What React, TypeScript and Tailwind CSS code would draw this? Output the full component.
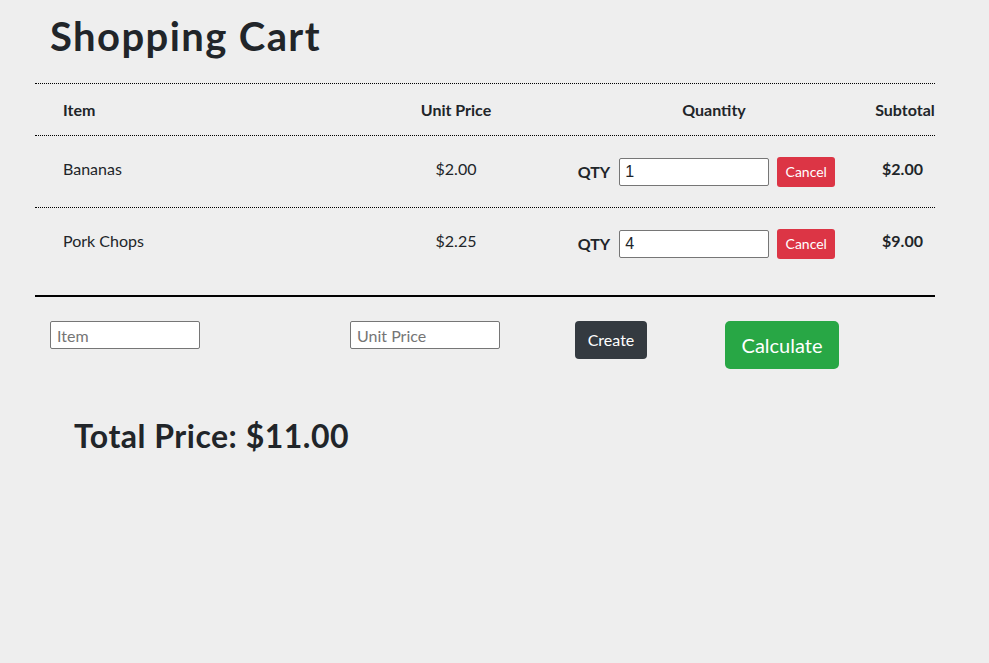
const items = [
  { name: "Bananas", price: "$2.00", qty: "1", subtotal: "$2.00" },
  { name: "Pork Chops", price: "$2.25", qty: "4", subtotal: "$9.00" },
];

const App = () => {
  return (
    <div className="min-h-[663px] bg-[#eeeeee] text-[#212529] font-['Lato','Noto_Sans',sans-serif]">
      <div className="ml-[35px] w-[900px]">
        <h1 className="h-[83px] pl-[15px] pt-[12px] text-[40px] font-bold leading-[1.2] tracking-[1.4px]">
          Shopping Cart
        </h1>

        <div className="grid grid-cols-[324px_194px_322px_60px] border-t border-dotted border-black">
          <div className="flex h-[51px] items-center pl-[28px] font-bold">Item</div>
          <div className="flex items-center justify-center font-bold">Unit Price</div>
          <div className="flex items-center justify-center font-bold">Quantity</div>
          <div className="flex items-center justify-center whitespace-nowrap font-bold">Subtotal</div>
        </div>

        {items.map(item => (
          <div
            key={item.name}
            className="grid h-[72px] grid-cols-[324px_194px_322px_60px] border-t border-dotted border-black"
          >
            <div className="flex items-center pb-[6px] pl-[28px]">{item.name}</div>
            <div className="flex items-center justify-center pb-[6px]">{item.price}</div>
            <div className="flex items-center justify-center pr-[15px]">
              <span className="mr-[9px] font-bold">QTY</span>
              <input
                defaultValue={item.qty}
                className="h-[28px] w-[150px] rounded-[2px] border border-[#767676] bg-white px-[5px] font-['Liberation_Sans',sans-serif] text-[16px] outline-none"
              />
              <button className="ml-[8px] h-[30px] w-[58px] rounded-[3px] bg-[#dc3545] text-[14px] text-white">
                Cancel
              </button>
            </div>
            <div className="flex items-center justify-center pb-[6px] pr-[5px] font-bold">
              {item.subtotal}
            </div>
          </div>
        ))}

        <div className="mt-[16px] border-t-2 border-black" />

        <div className="flex items-start pt-[24px]">
          <input
            placeholder="Item"
            className="ml-[15px] h-[28px] w-[150px] rounded-[2px] border border-[#767676] bg-white px-[6px] text-[16px] outline-none placeholder:text-[#757575]"
          />
          <input
            placeholder="Unit Price"
            className="ml-[150px] h-[28px] w-[150px] rounded-[2px] border border-[#767676] bg-white px-[6px] text-[16px] outline-none placeholder:text-[#757575]"
          />
          <button className="ml-[75px] h-[38px] w-[72px] rounded-[4px] bg-[#343a40] text-[16px] text-white">
            Create
          </button>
          <button className="ml-[78px] h-[48px] w-[114px] rounded-[5px] bg-[#28a745] text-[20px] text-white">
            Calculate
          </button>
        </div>

        <h2 className="mt-[48px] pl-[39px] text-[32px] font-bold leading-[1.2] tracking-[0.5px]">
          Total Price: $11.00
        </h2>
      </div>
    </div>
  );
};

export default App;
